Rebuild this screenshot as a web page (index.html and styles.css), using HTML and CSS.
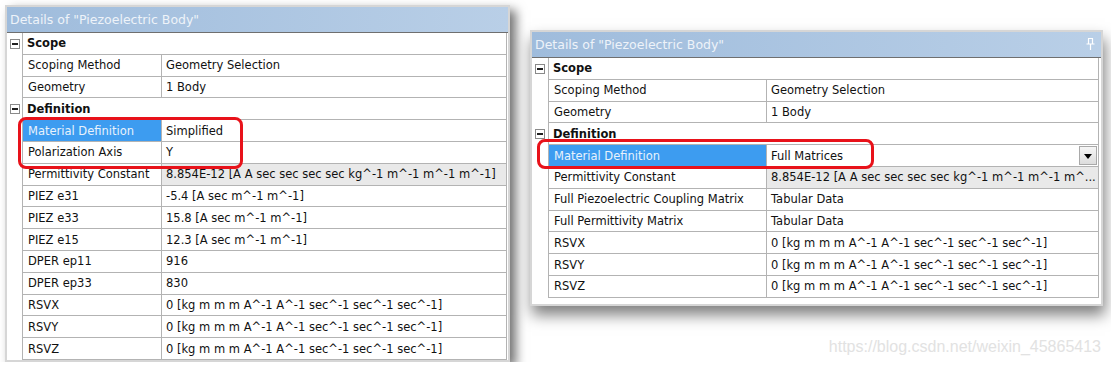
FILE: index.html
```html
<!DOCTYPE html>
<html lang="en">
<head>
    <meta charset="UTF-8">
    <title>Details of "Piezoelectric Body"</title>
    <link rel="stylesheet" href="styles.css">
</head>
<body>
    <div class="stage">
        <div class="panel panel-left">
            <div class="title">Details of "Piezoelectric Body"</div>
            <div class="grid">
                <div class="gutter"><span class="toggle"></span></div>
                <div class="group">Scope</div>
                <div class="gutter"></div><div class="name">Scoping Method</div><div class="value">Geometry Selection</div>
                <div class="gutter"></div><div class="name">Geometry</div><div class="value">1 Body</div>
                <div class="gutter"><span class="toggle"></span></div>
                <div class="group">Definition</div>
                <div class="gutter"></div><div class="name selected">Material Definition</div><div class="value">Simplified</div>
                <div class="gutter"></div><div class="name">Polarization Axis</div><div class="value">Y</div>
                <div class="gutter"></div><div class="name">Permittivity Constant</div><div class="value readonly">8.854E-12 [A A sec sec sec sec kg^-1 m^-1 m^-1 m^-1]</div>
                <div class="gutter"></div><div class="name">PIEZ e31</div><div class="value">-5.4 [A sec m^-1 m^-1]</div>
                <div class="gutter"></div><div class="name">PIEZ e33</div><div class="value">15.8 [A sec m^-1 m^-1]</div>
                <div class="gutter"></div><div class="name">PIEZ e15</div><div class="value">12.3 [A sec m^-1 m^-1]</div>
                <div class="gutter"></div><div class="name">DPER ep11</div><div class="value">916</div>
                <div class="gutter"></div><div class="name">DPER ep33</div><div class="value">830</div>
                <div class="gutter"></div><div class="name">RSVX</div><div class="value">0 [kg m m m A^-1 A^-1 sec^-1 sec^-1 sec^-1]</div>
                <div class="gutter"></div><div class="name">RSVY</div><div class="value">0 [kg m m m A^-1 A^-1 sec^-1 sec^-1 sec^-1]</div>
                <div class="gutter"></div><div class="name">RSVZ</div><div class="value">0 [kg m m m A^-1 A^-1 sec^-1 sec^-1 sec^-1]</div>
            </div>
            <div class="mark mark-left"></div>
        </div>

        <div class="panel panel-right">
            <div class="title">
                Details of "Piezoelectric Body"
                <svg class="pin" width="9" height="12" viewBox="0 0 9 12">
                    <path d="M2 0.5h5M2.5 0.5v5M6.5 0.5v5M0.5 6h8M4.5 6v6" stroke="#fff" stroke-width="1.2" fill="none"/>
                </svg>
            </div>
            <div class="grid">
                <div class="gutter"><span class="toggle"></span></div>
                <div class="group">Scope</div>
                <div class="gutter"></div><div class="name">Scoping Method</div><div class="value">Geometry Selection</div>
                <div class="gutter"></div><div class="name">Geometry</div><div class="value">1 Body</div>
                <div class="gutter"><span class="toggle"></span></div>
                <div class="group">Definition</div>
                <div class="gutter"></div><div class="name selected">Material Definition</div><div class="value combo">Full Matrices<span class="drop"></span></div>
                <div class="gutter"></div><div class="name">Permittivity Constant</div><div class="value readonly">8.854E-12 [A A sec sec sec sec kg^-1 m^-1 m^-1 m^...</div>
                <div class="gutter"></div><div class="name">Full Piezoelectric Coupling Matrix</div><div class="value">Tabular Data</div>
                <div class="gutter"></div><div class="name">Full Permittivity Matrix</div><div class="value">Tabular Data</div>
                <div class="gutter"></div><div class="name">RSVX</div><div class="value">0 [kg m m m A^-1 A^-1 sec^-1 sec^-1 sec^-1]</div>
                <div class="gutter"></div><div class="name">RSVY</div><div class="value">0 [kg m m m A^-1 A^-1 sec^-1 sec^-1 sec^-1]</div>
                <div class="gutter"></div><div class="name">RSVZ</div><div class="value">0 [kg m m m A^-1 A^-1 sec^-1 sec^-1 sec^-1]</div>
            </div>
            <div class="mark mark-right"></div>
        </div>
    </div>
    <div class="watermark">https://blog.csdn.net/weixin_45865413</div>
</body>
</html>
```
FILE: styles.css
```css
body {
    margin: 0;
    background-color: #ffffff;
    font-family: "DejaVu Sans", Verdana, sans-serif;
    font-size: 11.5px;
    color: #111111;
    overflow: hidden;
}
.stage {
    display: flex;
    align-items: flex-start;
    padding: 5px 0 0 5px;
}
.panel {
    position: relative;
    background-color: #ffffff;
    border: 2px solid #d6d6d6;
}
.panel-left {
    width: 501px;
    box-shadow: 6px 5px 10px rgba(0, 0, 0, 0.55);
}
.panel-right {
    width: 569px;
    margin-left: 20px;
    margin-top: 25px;
    padding-bottom: 6px;
    box-shadow: 2px 9px 14px rgba(0, 0, 0, 0.5);
}
.title {
    position: relative;
    height: 25px;
    line-height: 25px;
    padding-left: 3px;
    font-size: 12.5px;
    color: #eef3f9;
    background: linear-gradient(to right, #9fbcdc, #b9cfe7);
    border-bottom: 1px solid #6f6f6f;
}
.pin {
    position: absolute;
    right: 6px;
    top: 6px;
}
.grid {
    display: grid;
    grid-auto-rows: 21.8px;
}
.panel-left .grid {
    grid-template-columns: 15px 139px 346px;
}
.panel-right .grid {
    grid-template-columns: 16px 218px 333px;
}
.gutter {
    display: flex;
    align-items: center;
    justify-content: center;
}
.toggle {
    position: relative;
    box-sizing: border-box;
    width: 10px;
    height: 10px;
    border: 1px solid #8a8a8a;
    background-color: #ffffff;
}
.toggle::after {
    content: "";
    position: absolute;
    left: 1px;
    right: 1px;
    top: 3px;
    height: 2px;
    background-color: #202020;
}
.group, .name, .value {
    box-sizing: border-box;
    display: flex;
    align-items: center;
    white-space: nowrap;
    overflow: hidden;
    border-left: 1px solid #b3b3b3;
    border-bottom: 1px solid #b3b3b3;
}
.group {
    grid-column: span 2;
    padding-left: 4px;
    font-weight: bold;
    border-right: 1px solid #b3b3b3;
}
.name {
    padding-left: 5px;
}
.value {
    padding-left: 4px;
    border-right: 1px solid #b3b3b3;
}
.selected {
    background-color: #3d9cf0;
    color: #e8f2fc;
}
.readonly {
    background-color: #e9e9e9;
}
.combo {
    justify-content: space-between;
    padding-right: 1px;
}
.drop {
    position: relative;
    box-sizing: border-box;
    width: 18px;
    height: 19px;
    border: 1px solid #a9a9a9;
    background: linear-gradient(#f6f6f6, #dcdcdc);
}
.drop::after {
    content: "";
    position: absolute;
    left: 4px;
    top: 7px;
    border-left: 4px solid transparent;
    border-right: 4px solid transparent;
    border-top: 5px solid #000000;
}
.mark {
    position: absolute;
    border: 3px solid #e8121a;
    border-radius: 8px;
}
.mark-left {
    left: 11px;
    top: 110px;
    width: 219px;
    height: 46px;
}
.mark-right {
    left: 5px;
    top: 107px;
    width: 331px;
    height: 24px;
}
.watermark {
    position: absolute;
    right: 10px;
    top: 338px;
    font-family: "Liberation Sans", Arial, sans-serif;
    font-size: 16px;
    color: #e2e2e2;
}
```
